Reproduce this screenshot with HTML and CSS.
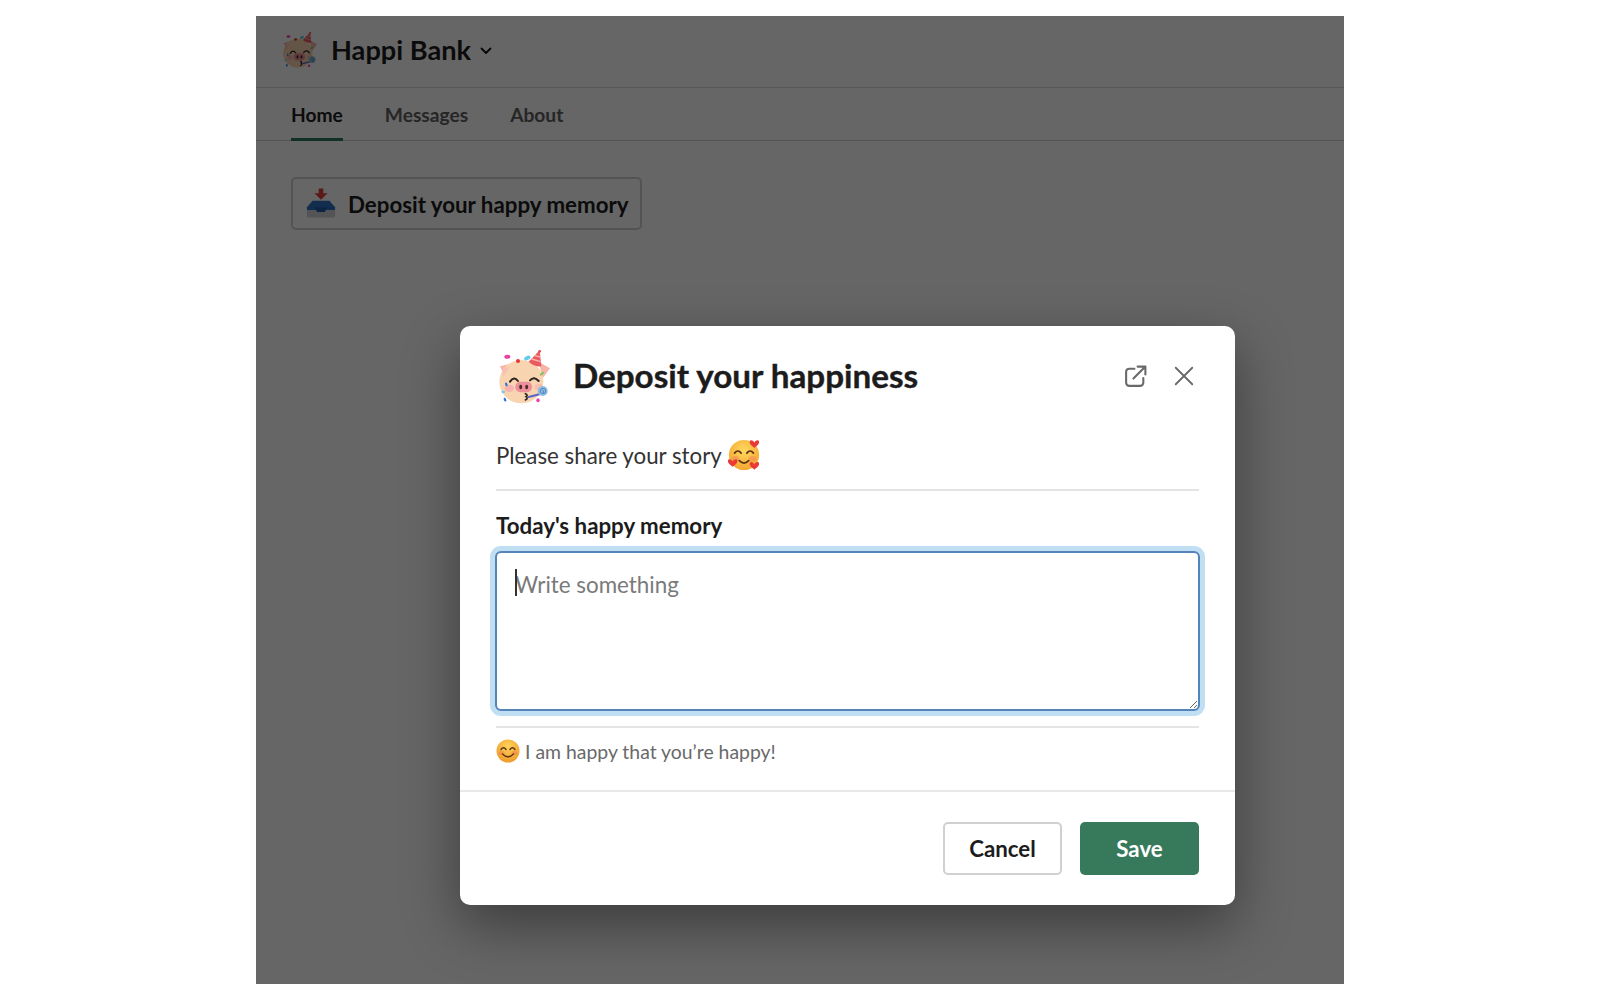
FILE: index.html
```html
<!DOCTYPE html>
<html lang="en">
<head>
<meta charset="utf-8">
<title>Happi Bank</title>
<link rel="stylesheet" href="styles.css">
</head>
<body>
<svg class="defs" width="0" height="0" aria-hidden="true">
  <symbol id="pig" viewBox="0 0 240 210">
    <path d="M42 76 L82 66 L58 112 Z" fill="#f6b4a6"/>
    <path d="M158 62 L192 82 L170 112 Z" fill="#f6b4a6"/>
    <ellipse cx="106" cy="122" rx="66" ry="65" fill="#f9d4b0"/>
    <path d="M48 84 L72 76 L52 108 Z" fill="#f8c0b0"/>
    <path d="M128 62 L161 28 L166 76 Q145 78 128 62 Z" fill="#ea5b5f"/>
    <path d="M137 54 L164 62 M146 44 L163 48" stroke="#f9b4b0" stroke-width="4" fill="none"/>
    <circle cx="161" cy="31" r="4" fill="#e8484c"/>
    <ellipse cx="70" cy="142" rx="14" ry="11" fill="#f7b3b0"/>
    <ellipse cx="158" cy="138" rx="12" ry="10" fill="#f7bdb0"/>
    <path d="M72 122 Q84 104 96 120 M132 118 Q144 104 158 120" stroke="#2b2320" stroke-width="6" fill="none" stroke-linecap="round"/>
    <rect x="88" y="122" width="50" height="32" rx="15" fill="#ec8f98"/>
    <ellipse cx="104" cy="138" rx="4.500" ry="7" fill="#4a2a2c"/>
    <ellipse cx="122" cy="138" rx="4.500" ry="7" fill="#4a2a2c"/>
    <path d="M118 158 Q128 162 120 167 Q128 172 118 177" stroke="#2b2320" stroke-width="5" fill="none" stroke-linecap="round"/>
    <path d="M128 168 L166 158" stroke="#5b62c8" stroke-width="6" stroke-linecap="round"/>
    <circle cx="170" cy="150" r="15" fill="#8dbde0"/>
    <path d="M170 158 a8 8 0 1 0 -7 -8 a5 5 0 1 0 6 -3" stroke="#4f86c0" stroke-width="3" fill="none"/>
    <ellipse cx="64" cy="47" rx="9" ry="6" fill="#ee3fa8"/>
    <circle cx="96" cy="60" r="6" fill="#e8352f"/>
    <ellipse cx="124" cy="51" rx="10" ry="6" fill="#62cdea" transform="rotate(-25 124 51)"/>
    <ellipse cx="168" cy="98" rx="8" ry="3.500" fill="#7fc75b" transform="rotate(-40 168 98)"/>
    <ellipse cx="61" cy="130" rx="3.500" ry="6" fill="#2f6fe0" transform="rotate(-20 61 130)"/>
    <ellipse cx="52" cy="153" rx="6" ry="3.500" fill="#76cde8"/>
    <ellipse cx="57" cy="176" rx="3.500" ry="6" fill="#2f6fe0" transform="rotate(-25 57 176)"/>
    <ellipse cx="156" cy="178" rx="5" ry="6" fill="#ee3fa8"/>
  </symbol>
  <symbol id="tray" viewBox="0 0 32 32">
    <path d="M1 22 H31 V30 Q31 32 29 32 H3 Q1 32 1 30 Z" fill="#cfd2d6"/>
    <path d="M7 14 H25 L31 21 V24 H1 V21 Z" fill="#2f72c4"/>
    <path d="M9 21 H23 L20 26 H12 Z" fill="#1f5aa5"/>
    <path d="M13.500 1 H18.500 V6 H23 L16 13 L9 6 H13.500 Z" fill="#e0433c"/>
  </symbol>
  <symbol id="hearts" viewBox="0 0 36 36">
    <defs>
      <radialGradient id="gold" cx="50%" cy="35%" r="70%">
        <stop offset="0" stop-color="#ffd860"/>
        <stop offset="1" stop-color="#f4a32c"/>
      </radialGradient>
    </defs>
    <circle cx="18" cy="18" r="16" fill="url(#gold)"/>
    <ellipse cx="9" cy="22" rx="4" ry="3" fill="#f58a5a" opacity=".6"/>
    <ellipse cx="27" cy="22" rx="4" ry="3" fill="#f58a5a" opacity=".6"/>
    <path d="M8 16 Q11.500 11.500 15 16 M21 16 Q24.500 11.500 28 16" stroke="#5b3412" stroke-width="1.800" fill="none" stroke-linecap="round"/>
    <path d="M13 24 Q18 29 23 24" stroke="#5b3412" stroke-width="1.800" fill="none" stroke-linecap="round"/>
    <path d="M29 5 C27.500 2 24 1.500 24 4.500 C24 7 27 8.500 29 10.500 C31 8.500 34 7 34 4.500 C34 1.500 30.500 2 29 5 Z" fill="#ea3a36"/>
    <path d="M6 25 C4.500 22 1 21.500 1 24.500 C1 27 4 28.500 6 30.500 C8 28.500 11 27 11 24.500 C11 21.500 7.500 22 6 25 Z" fill="#ea3a36"/>
    <path d="M29 28 C27.500 25 24 24.500 24 27.500 C24 30 27 31.500 29 33.500 C31 31.500 34 30 34 27.500 C34 24.500 30.500 25 29 28 Z" fill="#ea3a36"/>
  </symbol>
  <symbol id="smile" viewBox="0 0 24 24">
    <defs>
      <radialGradient id="sun" cx="50%" cy="30%" r="75%">
        <stop offset="0" stop-color="#ffd35a"/>
        <stop offset="1" stop-color="#ee962a"/>
      </radialGradient>
    </defs>
    <circle cx="12" cy="12" r="11.500" fill="url(#sun)"/>
    <ellipse cx="5.500" cy="14" rx="3" ry="2" fill="#f2804f" opacity=".55"/>
    <ellipse cx="18.500" cy="14" rx="3" ry="2" fill="#f2804f" opacity=".55"/>
    <path d="M5 10.500 Q7.500 7 10 10.500 M14 10.500 Q16.500 7 19 10.500" stroke="#5b3412" stroke-width="1.400" fill="none" stroke-linecap="round"/>
    <path d="M6.500 15 Q12 20.500 17.500 15" stroke="#5b3412" stroke-width="1.400" fill="none" stroke-linecap="round"/>
  </symbol>
</svg>

<div class="app">
  <header class="app-header">
    <svg class="app-logo"><use href="#pig"/></svg>
    <span class="app-name">Happi Bank</span>
    <svg class="chevron" viewBox="0 0 12 8"><path d="M1.500 1.500 L6 6 L10.500 1.500" fill="none" stroke="#111" stroke-width="1.800" stroke-linecap="round" stroke-linejoin="round"/></svg>
  </header>
  <nav class="tabs">
    <a class="tab tab-active">Home</a>
    <a class="tab">Messages</a>
    <a class="tab">About</a>
  </nav>
  <main class="home">
    <button class="deposit-btn" type="button">
      <svg class="tray-icon"><use href="#tray"/></svg>
      <span>Deposit your happy memory</span>
    </button>
  </main>

  <div class="overlay">
    <section class="modal">
      <div class="modal-head">
        <svg class="modal-pig"><use href="#pig"/></svg>
        <h1 class="modal-title">Deposit your happiness</h1>
        <svg class="head-icon icon-open" viewBox="0 0 24 24"><path d="M11 4.500 H6 A3 3 0 0 0 3 7.500 V18 A3 3 0 0 0 6 21 H16.500 A3 3 0 0 0 19.500 18 V13.500" fill="none" stroke="#696969" stroke-width="2" stroke-linecap="round"/><path d="M10 14 L21.500 2.500 M14 2.500 H21.500 V10" fill="none" stroke="#696969" stroke-width="2" stroke-linecap="round" stroke-linejoin="round"/></svg>
        <svg class="head-icon icon-close" viewBox="0 0 24 24"><path d="M3 3 L21 21 M21 3 L3 21" fill="none" stroke="#696969" stroke-width="2" stroke-linecap="round"/></svg>
      </div>
      <div class="modal-body">
        <p class="intro">Please share your story <svg class="intro-emoji"><use href="#hearts"/></svg></p>
        <hr class="rule rule-intro">
        <label class="field-label" for="memory">Today's happy memory</label>
        <div class="input-wrap">
          <textarea class="memory-input" id="memory" placeholder="Write something"></textarea>
          <span class="caret"></span>
        </div>
        <hr class="rule rule-hint">
        <p class="hint"><svg class="hint-emoji"><use href="#smile"/></svg> I am happy that you’re happy!</p>
      </div>
      <div class="modal-foot">
        <button class="btn btn-cancel" type="button">Cancel</button>
        <button class="btn btn-save" type="button">Save</button>
      </div>
    </section>
  </div>
</div>
</body>
</html>
```
FILE: styles.css
```css
* { box-sizing: border-box; }
html, body { margin: 0; height: 100%; background: #fff; }
body {
  padding: 16px 256px;
  font-family: Lato, "Open Sans", sans-serif;
  color: #1d1c1d;
}
.defs { position: absolute; }

.app {
  position: relative;
  height: 968px;
  background: #fff;
  overflow: hidden;
}
.app-header {
  display: flex;
  align-items: center;
  height: 72px;
  padding: 0 0 4px 18px;
  border-bottom: 1px solid #d6d6d6;
}
.app-logo { width: 54px; height: 47px; margin-right: 3px; }
.app-name { font-size: 27.2px; font-weight: 700; }
.chevron { width: 12px; height: 8px; margin-left: 9px; margin-top: 2px; }

.tabs {
  display: flex;
  gap: 42px;
  height: 53px;
  padding-left: 35px;
  border-bottom: 1px solid #d0d0d0;
}
.tab {
  display: flex;
  align-items: center;
  height: 53px;
  font-size: 19.2px;
  font-weight: 700;
  color: #616061;
}
.tab-active {
  color: #1d1c1d;
  border-bottom: 3px solid #2a7a5b;
  padding-top: 3px;
}

.home { padding: 36px 35px; }
.deposit-btn {
  display: flex;
  align-items: center;
  gap: 12px;
  width: 351px;
  height: 53px;
  padding: 1px 12px 0 13px;
  background: #fff;
  border: 2px solid #cfcfcf;
  border-radius: 5px;
  font: 700 22.300px Lato, sans-serif;
  color: #1d1c1d;
  white-space: nowrap;
}
.tray-icon { width: 30px; height: 31px; flex: none; margin-top: -3px; }

.overlay {
  position: absolute;
  inset: 0;
  background: rgba(0, 0, 0, 0.6);
}
.modal {
  position: absolute;
  left: 204px;
  top: 310px;
  width: 775px;
  height: 579px;
  background: #fff;
  border-radius: 10px;
  box-shadow: 0 20px 56px rgba(0, 0, 0, 0.42);
  display: flex;
  flex-direction: column;
}
.modal-head {
  display: flex;
  align-items: center;
  height: 56px;
  margin: 22px 36px 0;
}
.modal-pig { width: 80px; height: 70px; margin: -7px 7px -7px -10px; flex: none; }
.modal-title {
  flex: 1;
  margin: -2px 0 0;
  font-size: 33.200px;
  font-weight: 700;
  color: #1d1c1d;
  -webkit-text-stroke: 0.4px #1d1c1d;
}
.head-icon { flex: none; width: 22px; height: 22px; }
.head-icon.icon-open { width: 25px; height: 25px; margin-right: 25px; }
.icon-close { margin-right: 4px; }

.modal-body { padding: 0 36px; }
.intro {
  display: flex;
  align-items: center;
  gap: 5px;
  height: 32px;
  margin: 35px 0 0;
  font-size: 22.300px;
  color: #333;
}
.intro-emoji { width: 34px; height: 34px; }
.rule { border: 0; height: 2px; margin: 0; background: #e4e4e4; }
.rule-intro { margin-top: 18px; }
.field-label {
  display: block;
  margin-top: 21px;
  font-size: 22.300px;
  font-weight: 700;
  line-height: 28px;
}
.input-wrap { position: relative; margin: 11px -1px 0; }
.memory-input {
  display: block;
  width: 100%;
  height: 160px;
  padding: 17px 18px;
  border: 2px solid #5584bb;
  border-radius: 6px;
  box-shadow: 0 0 0 5px #c0dff2;
  outline: none;
  font: 22.400px/30px Lato, sans-serif;
  color: #1d1c1d;
}
.memory-input::placeholder { color: #7a7a7a; opacity: 1; }
.caret {
  position: absolute;
  left: 20px;
  top: 18px;
  width: 1.500px;
  height: 27px;
  background: #333;
}
.rule-hint { margin-top: 15px; }
.hint {
  display: flex;
  align-items: center;
  gap: 5px;
  height: 28px;
  margin: 9px 0 0;
  font-size: 19.400px;
  color: #696969;
}
.hint-emoji { width: 24px; height: 24px; }

.modal-foot {
  display: flex;
  justify-content: flex-end;
  gap: 18px;
  margin-top: auto;
  padding: 30px 36px 30px;
  border-top: 2px solid #e8e8e8;
}
.btn {
  width: 119px;
  height: 53px;
  border-radius: 5px;
  font: 700 22.300px Lato, sans-serif;
}
.btn-cancel { background: #fff; border: 2px solid #d0d0d0; color: #1d1c1d; }
.btn-save { background: #377a5b; border: 0; color: #fff; }
```
